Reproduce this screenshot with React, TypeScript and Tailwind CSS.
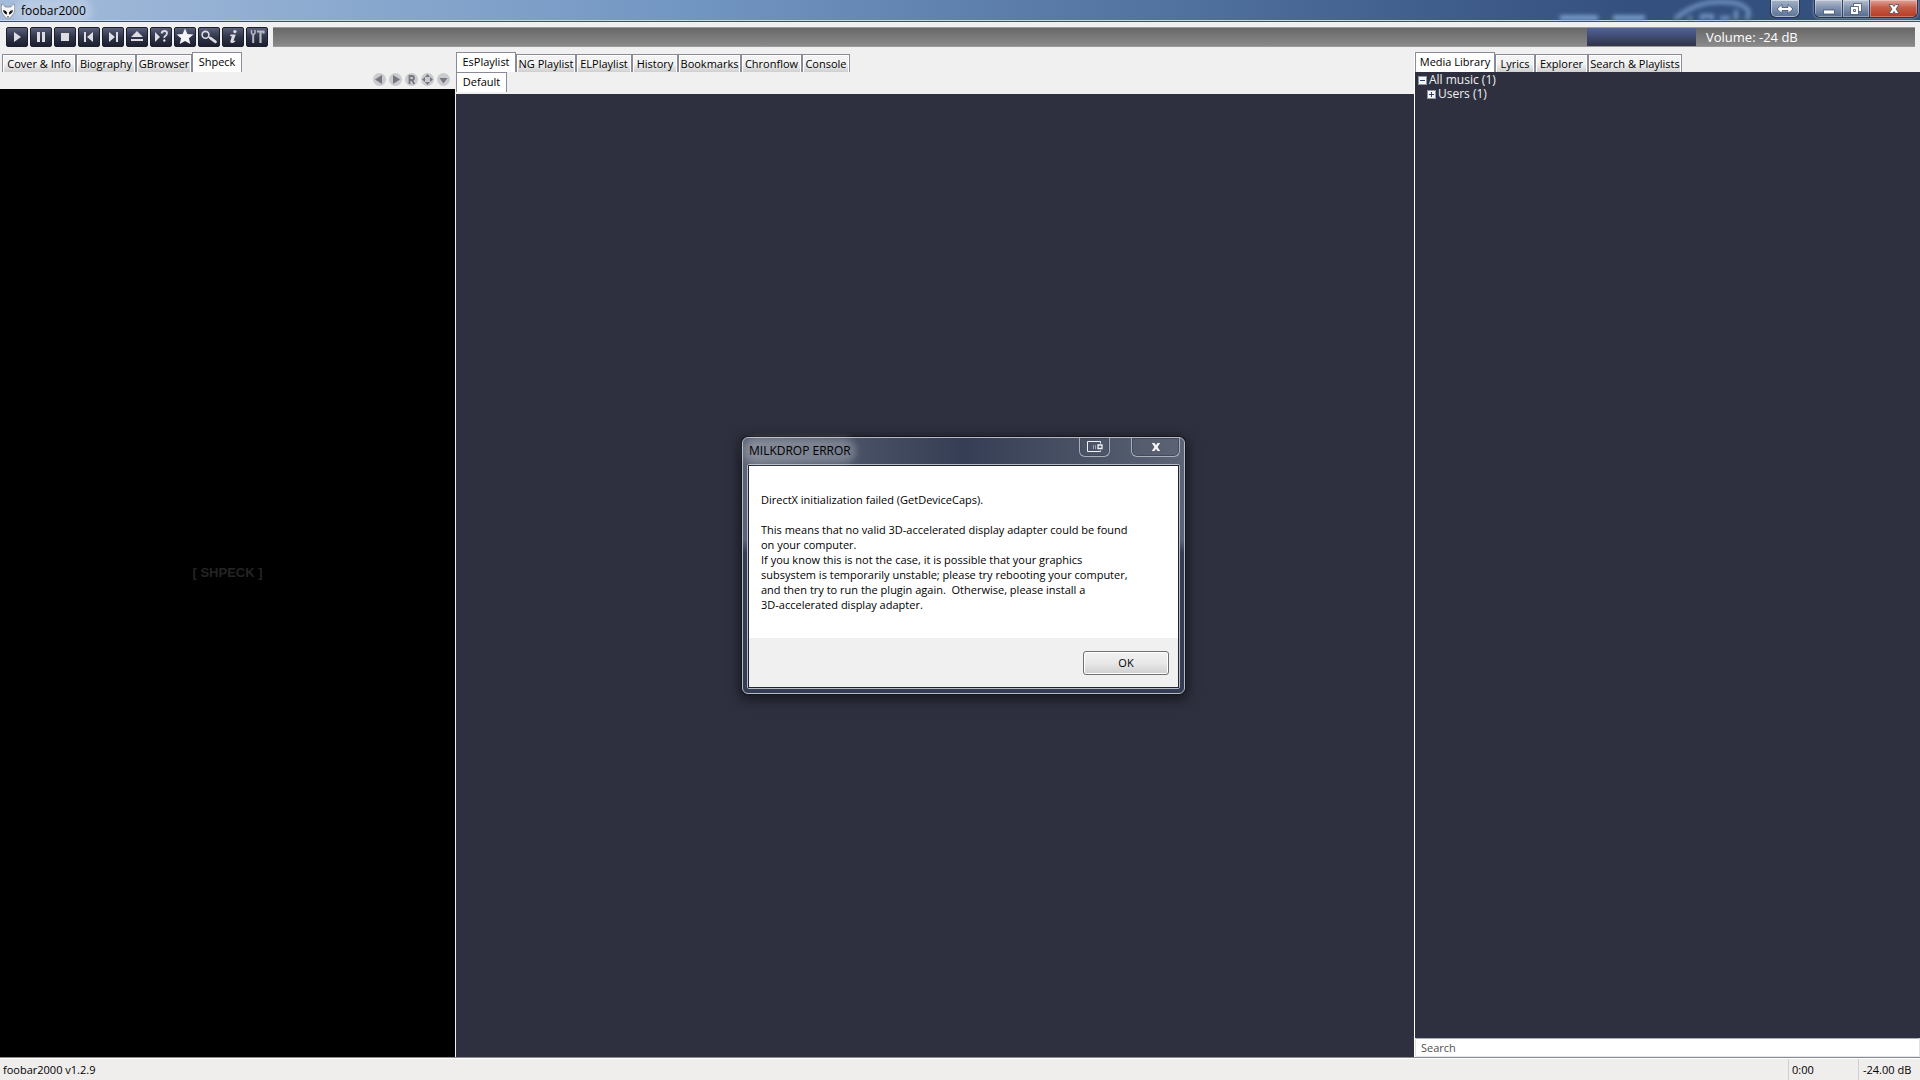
import type { ReactNode } from "react";

const INK = "#dcdce2";

function ToolButton({ label, children }: { label: string; children: ReactNode }) {
  return (
    <button
      type="button"
      aria-label={label}
      className="flex h-5 w-[22px] shrink-0 items-center justify-center rounded-xs border border-[#1b1e2c] bg-linear-to-b from-[#596079] via-[#30354a] to-[#1c1f2e]"
    >
      <svg viewBox="0 0 22 20" className="h-5 w-[22px] shrink-0" aria-hidden="true">
        {children}
      </svg>
    </button>
  );
}

function Toolbar() {
  return (
    <div className="flex h-[30px] shrink-0 items-center pr-[5px] pl-1.5">
      <div className="flex gap-0.5">
        <ToolButton label="Play">
          <path d="M8 5l7 5-7 5z" fill={INK} />
        </ToolButton>
        <ToolButton label="Pause">
          <path d="M7 5h3v10H7zM12 5h3v10h-3z" fill={INK} />
        </ToolButton>
        <ToolButton label="Stop">
          <path d="M7 6h8v8H7z" fill={INK} />
        </ToolButton>
        <ToolButton label="Previous">
          <path d="M6 5h2v10H6zM15 5v10l-6-5z" fill={INK} />
        </ToolButton>
        <ToolButton label="Next">
          <path d="M14 5h2v10h-2zM7 5v10l6-5z" fill={INK} />
        </ToolButton>
        <ToolButton label="Eject">
          <path d="M11 4l6 6H5zM5 12h12v2H5z" fill={INK} />
        </ToolButton>
        <ToolButton label="Random">
          <path d="M5 5l5 5-5 5z" fill={INK} />
          <path d="M11.500 6.500q.5-2.500 3-2.500t2.500 2.200q0 1.500-1.500 2.500t-1.200 2.300" fill="none" stroke={INK} strokeWidth="1.800" />
          <circle cx="14.300" cy="13.500" r="1.200" fill={INK} />
        </ToolButton>
        <ToolButton label="Favourite">
          <path d="M11 1.500l2.400 5.400 6 .5-4.500 3.900 1.400 5.800-5.300-3.100-5.300 3.100 1.400-5.800-4.500-3.900 6-.5z" fill="#f4f4f8" />
        </ToolButton>
        <ToolButton label="Find">
          <circle cx="7.500" cy="7.800" r="3.400" fill="none" stroke={INK} strokeWidth="1.600" />
          <path d="M10.500 9.800l2 1.400" stroke={INK} strokeWidth="1.600" />
          <path d="M12.500 11.200l5 3.600" stroke={INK} strokeWidth="2.800" strokeLinecap="round" />
        </ToolButton>
        <ToolButton label="Information">
          <circle cx="12.900" cy="4.600" r="1.700" fill={INK} />
          <path d="M8.500 7.600h5.200l-2.200 6.500 1.800-.6-.3 1.200q-2 1.500-3.600 1.300-1.500-.3-1-2l1.500-4.800H8.200z" fill={INK} />
        </ToolButton>
        <ToolButton label="Preferences">
          <path d="M5.500 3v3q0 1.300 1.700 1.300T9 6V3" fill="none" stroke="#b8b9c2" strokeWidth="1.500" />
          <path d="M7.200 7v9" stroke="#b8b9c2" strokeWidth="2" />
          <path d="M11 4.500h6.500v2M14.500 4.500V16" fill="none" stroke="#b8b9c2" strokeWidth="2.200" />
        </ToolButton>
      </div>
      <div className="ml-[5px] flex h-5 flex-1 border-y border-[#9a9a9a] bg-linear-to-b from-[#686868] to-[#8a8a8a]">
        <div role="progressbar" aria-label="Playback position" className="flex-1" />
        <div role="meter" aria-label="Volume" aria-valuenow={-24} aria-valuemin={-100} aria-valuemax={0} className="flex w-[328px] items-center">
          <div className="h-full w-[109px] bg-linear-to-b from-[#50629a] to-[#303448]" />
          <span className="pl-2.5 font-['Open_Sans','Noto_Sans',sans-serif] text-[13px] leading-4 text-white">Volume: -24 dB</span>
        </div>
      </div>
    </div>
  );
}

function Logo() {
  return (
    <svg viewBox="0 0 14 16" className="h-4 w-3.5" aria-hidden="true">
      <path d="M.8 .8q2.400.6 3.400 3.200h5.600q1-2.600 3.400-3.200 1 3.500.3 7.400-.6 3-2.500 4.300L8.800 15.200H5.200L3 12.500Q1.100 11.200.5 8.200-.2 4.300.8.800z" fill="#f6f6f6" stroke="#70757e" strokeWidth=".7" />
      <path d="M2 7q3 .3 4 2.600v1.800Q2.600 10.800 2 7zM12 7q-3 .3-4 2.600v1.800Q11.400 10.800 12 7z" fill="#111" />
      <path d="M6 13.800h2" stroke="#555" />
    </svg>
  );
}

function TitleBar() {
  return (
    <header className="relative flex h-[22px] shrink-0 justify-between overflow-hidden border-b border-[#3d4f70] bg-linear-to-r from-[#a4bcdb] via-[#7397c3] via-35% to-[#34507e] to-85% shadow-[inset_0_-1px_0_#c4d3e6]">
      <svg viewBox="0 0 240 20" className="absolute right-[150px] bottom-px h-5 w-60 blur-[2px]" aria-hidden="true">
        <path d="M30 18h38M83 18h32" stroke="#83a8d6" strokeWidth="5" />
        <path d="M145 19q18-16 42-17t31 8q2 5-2 10" fill="none" stroke="#7397c6" strokeWidth="4" />
        <path d="M160 20v-4M172 20v-4h10v4M190 18h10M206 20V10" stroke="#7397c6" strokeWidth="4" fill="none" />
      </svg>
      <div className="relative flex h-[21px] items-center gap-1.5 pl-px">
        <Logo />
        <h1 className="rounded-full bg-white/25 font-['Open_Sans','Noto_Sans',sans-serif] text-xs leading-4 text-black shadow-[0_0_8px_6px_rgba(255,255,255,0.25)]">foobar2000</h1>
      </div>
      <div className="relative flex h-[18px] gap-3.5 pr-0.5">
        <button type="button" aria-label="Span monitors" className="flex w-[30px] items-center justify-center rounded-b-md border border-t-0 border-[#26344f] bg-linear-to-b from-[#a3b3c8] to-[#5b7397] shadow-[inset_0_0_0_1px_rgba(255,255,255,0.5)]">
          <svg viewBox="0 0 18 10" className="h-2.5 w-[18px]" aria-hidden="true">
            <path d="M1 5l5-4.500V3.500h6V.5L17 5l-5 4.500V6.500H6v3z" fill="#fff" stroke="#42506a" strokeWidth=".8" />
          </svg>
        </button>
        <div className="flex overflow-hidden rounded-b-md border border-t-0 border-[#26344f] shadow-[0_0_3px_rgba(255,255,255,0.6)]">
          <button type="button" aria-label="Minimize" className="flex w-[28px] items-center justify-center border-r border-[#33435f] bg-linear-to-b from-[#b7c0d0] via-[#8393ae] via-45% to-[#526a90] shadow-[inset_0_0_0_1px_rgba(255,255,255,0.35)]">
            <svg viewBox="0 0 12 6" className="mt-1.5 h-1.5 w-3" aria-hidden="true">
              <path d="M.5 1h11v4H.5z" fill="#fff" stroke="#42506a" strokeWidth=".8" />
            </svg>
          </button>
          <button type="button" aria-label="Restore" className="flex w-[27px] items-center justify-center border-r border-[#33435f] bg-linear-to-b from-[#b7c0d0] via-[#8393ae] via-45% to-[#526a90] shadow-[inset_0_0_0_1px_rgba(255,255,255,0.35)]">
            <svg viewBox="0 0 12 12" className="h-3 w-3" aria-hidden="true">
              <path d="M3.500.5h8v8h-8z" fill="#fff" stroke="#42506a" strokeWidth=".8" />
              <path d="M.5 3.500h8v8h-8zM3.500 6.500v2h2v-2z" fill="#fff" fillRule="evenodd" stroke="#42506a" strokeWidth=".8" />
            </svg>
          </button>
          <button type="button" aria-label="Close" className="flex w-[47px] items-center justify-center bg-linear-to-b from-[#dfa59b] via-[#c55b47] via-45% to-[#b53a20] shadow-[inset_0_0_0_1px_rgba(255,255,255,0.3)]">
            <svg viewBox="0 0 12 10" className="h-2.5 w-3" aria-hidden="true">
              <path d="M1 .5h3.500L6 2.500 7.500.5H11L8 5l3 4.500H7.500L6 7.500 4.500 9.500H1L4 5z" fill="#fff" stroke="#42506a" strokeWidth=".8" />
            </svg>
          </button>
        </div>
      </div>
    </header>
  );
}

type TabItem = { label: string; width: string };

function Tabs({ items, active, name }: { items: TabItem[]; active: string; name: string }) {
  return (
    <div role="tablist" aria-label={name} className="flex h-5 shrink-0 items-end font-['Open_Sans','Noto_Sans',sans-serif] text-[11px] leading-3 whitespace-nowrap text-black">
      {items.map((tab) =>
        tab.label === active ? (
          <button key={tab.label} type="button" role="tab" aria-selected="true" className={`${tab.width} flex h-5 items-center justify-center border border-b-0 border-[#8a8b98] bg-white pb-0.5`}>
            {tab.label}
          </button>
        ) : (
          <button key={tab.label} type="button" role="tab" aria-selected="false" className={`${tab.width} flex h-[18px] items-center justify-center border border-b-0 border-[#8a8b98] bg-linear-to-b from-[#f3f3f3] from-50% to-[#cfcfcf] shadow-[inset_1px_1px_0_#fff,inset_-1px_0_0_#fff]`}>
            {tab.label}
          </button>
        ),
      )}
    </div>
  );
}

function RoundButton({ label, children }: { label: string; children: ReactNode }) {
  return (
    <button type="button" aria-label={label} className="flex size-[13px] items-center justify-center rounded-full bg-[#cacbce]">
      <svg viewBox="0 0 13 13" className="size-[13px]" fill="#77787d" aria-hidden="true">
        {children}
      </svg>
    </button>
  );
}

function VisualPanel() {
  return (
    <section className="flex w-[455px] shrink-0 flex-col">
      <div className="pl-0.5">
        <Tabs
          name="Side panel"
          active="Shpeck"
          items={[
            { label: "Cover & Info", width: "w-[74px]" },
            { label: "Biography", width: "w-[60px]" },
            { label: "GBrowser", width: "w-[56px]" },
            { label: "Shpeck", width: "w-[50px]" },
          ]}
        />
      </div>
      <div className="flex h-[17px] shrink-0 items-start justify-end gap-[3px] pt-px pr-[5px]">
        <RoundButton label="Previous preset"><path d="M9 2v9L2 6.500z" /></RoundButton>
        <RoundButton label="Next preset"><path d="M4 2v9l7-4.500z" /></RoundButton>
        <RoundButton label="Random preset">
          <path d="M4.500 11V3H7q2 0 2 2T7 7H4.500M7 7l2.300 4" fill="none" stroke="#77787d" strokeWidth="1.800" />
        </RoundButton>
        <RoundButton label="Full screen"><path d="M6.500 1l2.500 3H4zM6.500 12L9 9H4zM1 6.500L4 4v5zM12 6.500L9 4v5z" /></RoundButton>
        <RoundButton label="Menu"><path d="M2.500 5h8l-4 5.500z" /></RoundButton>
      </div>
      <div className="flex flex-1 items-center justify-center bg-black font-['Liberation_Sans'] text-[13px] leading-4 font-bold text-[#242424]">
        [ SHPECK ]
      </div>
    </section>
  );
}

function PlaylistPanel() {
  return (
    <section className="ml-px flex flex-1 flex-col">
      <Tabs
        name="Playlist views"
        active="EsPlaylist"
        items={[
          { label: "EsPlaylist", width: "w-[60px]" },
          { label: "NG Playlist", width: "w-[60px]" },
          { label: "ELPlaylist", width: "w-[56px]" },
          { label: "History", width: "w-[46px]" },
          { label: "Bookmarks", width: "w-[63px]" },
          { label: "Chronflow", width: "w-[61px]" },
          { label: "Console", width: "w-[48px]" },
        ]}
      />
      <Tabs name="Playlists" active="Default" items={[{ label: "Default", width: "w-[51px]" }]} />
      <div className="mt-0.5 flex-1 bg-[#2e303f]" />
    </section>
  );
}

function TreeToggle({ open, label }: { open: boolean; label: string }) {
  return (
    <button type="button" aria-label={label} aria-expanded={open} className="size-[9px] shrink-0 border border-[#8f96a3] bg-[#f4f4f4]">
      <svg viewBox="0 0 7 7" className="size-[7px]" stroke="#27417c" aria-hidden="true">
        <path d={open ? "M1 3.500h5" : "M1 3.500h5M3.500 1v5"} />
      </svg>
    </button>
  );
}

function LibraryPanel() {
  return (
    <section className="flex w-[506px] shrink-0 flex-col border-l border-white">
      <Tabs
        name="Library"
        active="Media Library"
        items={[
          { label: "Media Library", width: "w-[80px]" },
          { label: "Lyrics", width: "w-[40px]" },
          { label: "Explorer", width: "w-[53px]" },
          { label: "Search & Playlists", width: "w-[94px]" },
        ]}
      />
      <ul className="flex-1 bg-[#2e303f] pt-px pl-[3px] font-['Open_Sans','Noto_Sans',sans-serif] text-xs leading-[14px] text-[#f0f0f2]">
        <li>
          <div className="flex items-center gap-0.5"><TreeToggle open label="Collapse All music" />All music (1)</div>
          <ul className="pl-[9px]">
            <li className="flex items-center gap-0.5"><TreeToggle open={false} label="Expand Users" />Users (1)</li>
          </ul>
        </li>
      </ul>
      <input
        type="text"
        aria-label="Search library"
        placeholder="Search"
        className="h-[19px] shrink-0 rounded-xs border border-t-[#a9acb5] border-x-[#dfe1e8] border-b-[#e3e6ee] bg-white px-[5px] font-['Open_Sans','Noto_Sans',sans-serif] text-[11px] leading-4 text-black outline-none placeholder:text-[#505050]"
      />
    </section>
  );
}

function StatusBar() {
  return (
    <footer className="flex h-[23px] shrink-0 flex-col border-t border-[#8a8a8a] bg-[#f0eded] font-['Open_Sans','Noto_Sans',sans-serif] text-[11px] text-black">
      <div className="flex flex-1 items-stretch border-t border-white leading-[22px]">
        <span className="flex-1 pl-[3px]">foobar2000 v1.2.9</span>
        <span className="w-[70px] border-l border-[#d2d0d0] pl-[3px]">0:00</span>
        <span className="w-[62px] border-l border-[#d2d0d0] pl-1">-24.00 dB</span>
      </div>
      <div className="h-0.5 border-t border-[#4c5f76] bg-[#c9dbec]" />
    </footer>
  );
}

const MESSAGE = `DirectX initialization failed (GetDeviceCaps).

This means that no valid 3D-accelerated display adapter could be found
on your computer.
If you know this is not the case, it is possible that your graphics
subsystem is temporarily unstable; please try rebooting your computer,
and then try to run the plugin again.  Otherwise, please install a
3D-accelerated display adapter.`;

function ErrorDialog() {
  return (
    <div
      role="alertdialog"
      aria-labelledby="dialog-title"
      aria-describedby="dialog-message"
      className="absolute top-[437px] left-[742px] w-[443px] rounded-md border border-[#b5bac4] bg-linear-to-b from-[#5c6373] via-[#59647a] via-40% to-[#343d54] to-45% px-1 pb-1 font-['Open_Sans','Noto_Sans',sans-serif] text-xs text-black shadow-[0_0_0_1px_#15161d,0_3px_12px_3px_rgba(0,0,0,0.5)]"
    >
      <div className="-mx-1 flex h-[26px] items-start justify-between rounded-t-md bg-linear-to-r from-[#5e6677] via-[#353e54] via-50% to-[#5c6475] pr-1 pl-1.5">
        <h2 id="dialog-title" className="mt-[5px] rounded-full bg-white/25 leading-4 shadow-[0_0_7px_5px_rgba(255,255,255,0.25)]">MILKDROP ERROR</h2>
        <div className="flex h-[19px] gap-[21px]">
          <button type="button" aria-label="Move to monitor" className="flex w-[31px] items-center justify-center rounded-b-md border border-t-0 border-[#a9aeb9] shadow-[inset_0_0_0_1px_#414a5e]">
            <svg viewBox="0 0 16 12" className="h-3 w-4" aria-hidden="true">
              <path d="M13.500 2.500v-2H.5v10h13v-1" fill="none" stroke="#f2f2f4" />
              <path d="M6.500 4v4M8.500 4v4" stroke="#9aa0ac" />
              <path d="M11 4h4v3.500h-4z" fill="none" stroke="#f2f2f4" strokeWidth="1.300" />
            </svg>
          </button>
          <button type="button" aria-label="Close dialog" className="flex w-[49px] items-center justify-center rounded-b-md border border-t-0 border-[#a9aeb9] shadow-[inset_0_0_0_1px_#414a5e]">
            <svg viewBox="0 0 12 10" className="h-2.5 w-3" aria-hidden="true">
              <path d="M1 .5h3.500L6 2.500 7.500.5H11L8 5l3 4.500H7.500L6 7.500 4.500 9.500H1L4 5z" fill="#f4f4f6" stroke="#3c4353" strokeWidth=".7" />
            </svg>
          </button>
        </div>
      </div>
      <div className="rounded-xs border border-[#b5bac4]">
        <div className="border border-[#1f2432] bg-[#f0f0f0]">
          <p id="dialog-message" className="bg-white pt-[26px] pb-[26px] pl-3 text-[11px] leading-[15px] whitespace-pre">{MESSAGE}</p>
          <div className="flex h-[49px] items-start justify-end pt-[13px] pr-[9px]">
            <button type="button" className="h-6 w-[86px] rounded-[3px] border border-[#707070] bg-linear-to-b from-[#f2f2f2] via-[#e8e8e8] via-50% to-[#cfcfcf] text-[11px] leading-4 shadow-[inset_0_0_0_1px_#fff]">OK</button>
          </div>
        </div>
      </div>
    </div>
  );
}

export default function App() {
  return (
    <div className="relative flex h-screen flex-col overflow-hidden bg-[#f0f0f0]">
      <TitleBar />
      <Toolbar />
      <main className="flex min-h-0 flex-1">
        <VisualPanel />
        <PlaylistPanel />
        <LibraryPanel />
      </main>
      <StatusBar />
      <ErrorDialog />
    </div>
  );
}
